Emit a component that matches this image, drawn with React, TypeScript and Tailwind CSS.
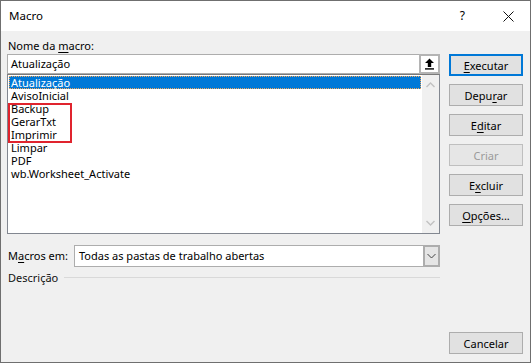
import React from "react";

const macros = ["Atualização", "AvisoInicial", "Backup", "GerarTxt", "Imprimir", "Limpar", "PDF", "wb.Worksheet_Activate"];

function Btn({ children, primary, disabled }: { children: React.ReactNode; primary?: boolean; disabled?: boolean }) {
  let cls = "h-[22px] w-[74px] flex items-center justify-center leading-[15px] ";
  if (primary) cls += "border-2 border-[#0078d7] bg-[#e1e1e1] text-black";
  else if (disabled) cls += "border border-[#bfbfbf] bg-[#e6e6e6] text-[#9a9a9a]";
  else cls += "border border-[#adadad] bg-[#e1e1e1] text-black";
  return <div className={cls}>{children}</div>;
}

export default function App() {
  return (
    <div
      className="w-[531px] h-[363px] border border-[#6f6f6f] flex flex-col bg-[#f0f0f0] text-[11px] text-black"
      style={{ fontFamily: '"Noto Sans", sans-serif' }}
    >
      {/* title bar */}
      <div className="h-[30px] bg-white flex items-center pl-[8px] pr-[16px]">
        <span className="text-[11.5px] text-black">Macro</span>
        <span className="ml-auto mr-[38px] text-[12px]">?</span>
        <svg width="11" height="11" viewBox="0 0 11 11">
          <path d="M0.5 0.5L10.5 10.5M10.5 0.5L0.5 10.5" stroke="#111" strokeWidth="1" />
        </svg>
      </div>

      <div className="flex-1 flex pl-[6px] gap-[9px]">
        {/* left column */}
        <div className="w-[433px] flex flex-col">
          <div className="h-[23px] pt-[7px] pl-[1px] leading-[15px]">
            Nome da <span className="underline underline-offset-2">m</span>acro:
          </div>
          <div className="h-[20px] border border-[#adadad] bg-white flex">
            <div className="flex-1 pl-[3px] leading-[17px]">Atualização</div>
            <div className="w-[21px] h-[20px] -mt-px -mr-px border-2 border-[#b4b4b4] bg-white flex items-center justify-center">
              <svg width="11" height="12" viewBox="0 0 11 12">
                <path d="M5.5 0.5L10 5H7.2V9H3.8V5H1Z" fill="#000" />
                <rect x="1" y="10.2" width="9" height="1.4" fill="#000" />
              </svg>
            </div>
          </div>
          <div className="relative h-[160px] border border-[#828790] border-t-[#7a7a7a] bg-white flex">
            <div className="flex-1 pt-[1px] pl-[1px] pr-[1px]">
              {macros.map((m, i) =>
                i === 0 ? (
                  <div key={m} className="h-[13px] leading-[11px] pl-[1px] bg-[#0078d7] text-white border border-dotted border-[#f2a65a]">
                    {m}
                  </div>
                ) : (
                  <div key={m} className="h-[13px] leading-[13px] pl-[2px]">
                    {m}
                  </div>
                )
              )}
            </div>
            <div className="w-[17px] bg-[#f0f0f0] flex flex-col items-center justify-between py-[7px]">
              <svg width="9" height="6" viewBox="0 0 9 6">
                <path d="M0.5 5L4.5 1L8.5 5" stroke="#c2c2c2" strokeWidth="1.4" fill="none" />
              </svg>
              <svg width="9" height="6" viewBox="0 0 9 6">
                <path d="M0.5 1L4.5 5L8.5 1" stroke="#c2c2c2" strokeWidth="1.4" fill="none" />
              </svg>
            </div>
            <div className="absolute left-0 top-[28px] w-[64px] h-[40px] border-2 border-[#e0242e]" />
          </div>

          <div className="mt-[11px] flex items-center h-[22px]">
            <div className="w-[67px] pl-[1px]">
              M<span className="underline underline-offset-2">a</span>cros em:
            </div>
            <div className="flex-1 h-[22px] border border-[#adadad] bg-white flex">
              <div className="flex-1 pl-[4px] leading-[20px]">Todas as pastas de trabalho abertas</div>
              <div className="w-[17px] -my-px -mr-px border-2 border-[#adadad] bg-[#e5e5e5] flex items-center justify-center">
                <svg width="9" height="6" viewBox="0 0 9 6">
                  <path d="M0.5 1L4.5 5L8.5 1" stroke="#444" strokeWidth="1" fill="none" />
                </svg>
              </div>
            </div>
          </div>

          <div className="mt-[3px] flex items-center h-[15px] leading-[15px]">
            <span className="pl-[1px] text-[#111]">Descrição</span>
            <div className="flex-1 ml-[6px] h-px bg-[#d9d9d9]" />
          </div>
        </div>

        {/* right column */}
        <div className="w-[74px] flex flex-col pt-[23px] pb-[8px] gap-[8px]">
          <Btn primary>
            <span><span className="underline underline-offset-2">E</span>xecutar</span>
          </Btn>
          <Btn>
            <span>Depu<span className="underline underline-offset-2">r</span>ar</span>
          </Btn>
          <Btn>
            <span>E<span className="underline underline-offset-2">d</span>itar</span>
          </Btn>
          <Btn disabled>Criar</Btn>
          <Btn>
            <span>E<span className="underline underline-offset-2">x</span>cluir</span>
          </Btn>
          <Btn>
            <span><span className="underline underline-offset-2">O</span>pções...</span>
          </Btn>
          <div className="mt-auto">
            <Btn>Cancelar</Btn>
          </div>
        </div>
      </div>
    </div>
  );
}
